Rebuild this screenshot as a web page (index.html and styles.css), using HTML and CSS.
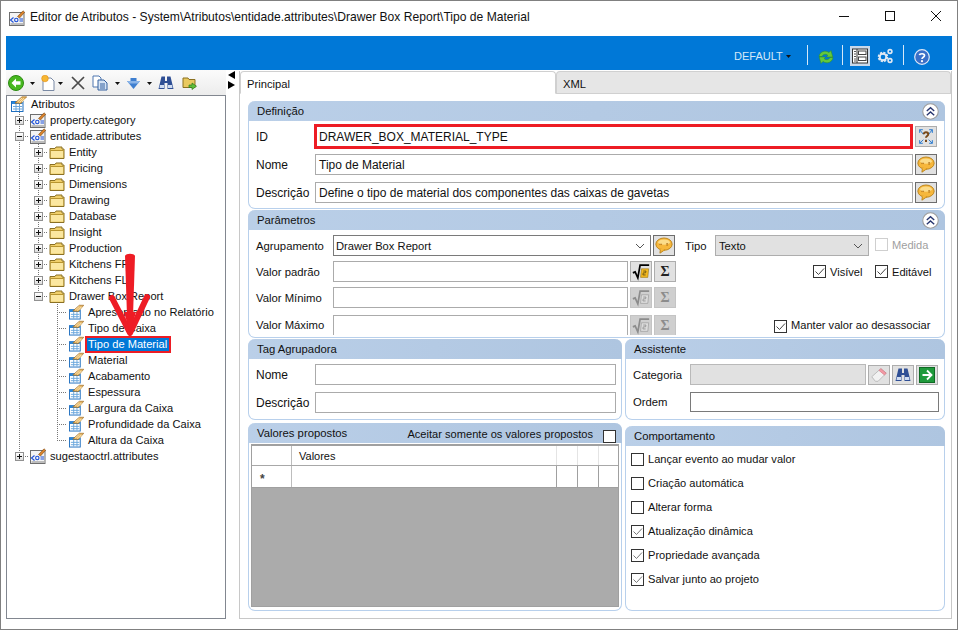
FILE: index.html
```html
<!DOCTYPE html>
<html lang="pt">
<head>
<meta charset="utf-8">
<title>Editor de Atributos</title>
<link rel="stylesheet" href="styles.css">
</head>
<body>
<svg class="defs" width="0" height="0">
  <symbol id="attr" viewBox="0 0 16 16">
    <rect x=".5" y="5.500" width="11.500" height="10" fill="#fff" stroke="#1f6fc0"/>
    <rect x="1" y="5.500" width="10.500" height="2.500" fill="#2b86d8"/>
    <path d="M2 10.500h9M2 13h9M5 8v7M8.500 8v7" stroke="#6aa6dc" fill="none"/>
    <path d="M4 7L11 .8h4.700L10 7.500z" fill="#e6b25a" stroke="#9c6a25" stroke-width=".7"/>
    <path d="M6.500 6l4.500-4M8.500 6.500l4.500-4.200M11 6l3.500-3.500" stroke="#fff3d0" stroke-width=".8"/>
  </symbol>
  <symbol id="script" viewBox="0 0 16 16">
    <rect x=".5" y="2.500" width="14.500" height="13" fill="#f4f4f4" stroke="#6e6e6e"/>
    <rect x="1.500" y="13" width="12.500" height="2" fill="#bdbdbd"/>
    <path d="M4.500 7.500L1.500 10l3 2.500" fill="none" stroke="#1b4fd8" stroke-width="1.100"/>
    <circle cx="7.300" cy="10" r="1.700" fill="none" stroke="#1b4fd8" stroke-width="1.100"/>
    <path d="M10.500 9h3.500M10.500 11h3.500" stroke="#1b4fd8"/>
    <path d="M8.500 6.500L14 .8l1.700 1.500L10.500 8z" fill="#d9822b" stroke="#7a4a18" stroke-width=".6"/>
  </symbol>
  <symbol id="folder" viewBox="0 0 16 16">
    <path d="M1 4.500h5l1-1.500h6v2h2v9.500H1z" fill="#f0cf6a" stroke="#8a7024"/>
    <path d="M2 7h12v6.500H2z" fill="#fbe7a0"/>
    <path d="M1.500 6.500h13" stroke="#b8952f"/>
  </symbol>
  <symbol id="balloon" viewBox="0 0 22 21">
    <ellipse cx="11" cy="9" rx="9" ry="6.800" fill="#f6b73c" stroke="#b87f14"/>
    <ellipse cx="11" cy="6.800" rx="6.500" ry="3" fill="#fbdc8a"/>
    <path d="M7 14.500l-.5 4.500 5-3.500z" fill="#f6b73c" stroke="#b87f14"/>
    <path d="M7 14.800l4 .5" stroke="#f6b73c" stroke-width="1.400"/>
    <path d="M6.500 8.500V10M8 8.500V10M13.500 8.500h2M13.500 10h2" stroke="#a5620f" stroke-width=".9"/>
  </symbol>
  <symbol id="sqrt" viewBox="0 0 22 21">
    <path d="M2 12l2.500-1 3 6.500L10 3.500h10" fill="none" stroke="#000" stroke-width="1.900"/>
    <path d="M11.500 7.500h8l-1 9.500h-8z" fill="#f5b91f" stroke="#8a6a10" stroke-width=".6"/>
    <path d="M13.500 10h3l-.4 2h-2.600l-.4 2.300h3" fill="none" stroke="#5a4a10" stroke-width=".9"/>
  </symbol>
  <symbol id="sqrtoff" viewBox="0 0 22 21">
    <path d="M2 12l2.500-1 3 6.500L10 3.500h10" fill="none" stroke="#8c8c8c" stroke-width="1.900"/>
    <path d="M11.500 7.500h8l-1 9.500h-8z" fill="#dcdcdc" stroke="#8c8c8c" stroke-width=".6"/>
    <path d="M13.500 10h3l-.4 2h-2.600l-.4 2.300h3" fill="none" stroke="#8c8c8c" stroke-width=".9"/>
  </symbol>
  <symbol id="binoc" viewBox="0 0 16 16">
    <path d="M3.500 1.500h3.500v4.500h2V1.500h3.500l3 12.500h-6V8h-3v6h-6z" fill="#2f4f95"/>
    <path d="M2 10h4v3H1.500zM10 10h4l.5 3H10z" fill="#cfdcf2"/>
  </symbol>
  <symbol id="chevs" viewBox="0 0 16 16">
    <circle cx="8" cy="8" r="7.300" fill="#fff" stroke="#9c9c9c"/>
    <path d="M4.500 7.500L8 4.500l3.500 3M4.500 11.500L8 8.500l3.500 3" fill="none" stroke="#27356f" stroke-width="1.300"/>
  </symbol>
  <symbol id="gear" viewBox="0 0 16 16">
    <circle cx="6" cy="9" r="4" fill="none" stroke="#dfe8f3" stroke-width="2.600" stroke-dasharray="2 1.100"/>
    <circle cx="6" cy="9" r="3.300" fill="none" stroke="#dfe8f3" stroke-width="1.900"/>
    <circle cx="13" cy="3.500" r="1.900" fill="none" stroke="#dfe8f3" stroke-width="1.600"/>
    <circle cx="13" cy="12.500" r="1.900" fill="none" stroke="#dfe8f3" stroke-width="1.600"/>
  </symbol>
  <symbol id="caret" viewBox="0 0 5 3"><path d="M0 0h5L2.500 3z" fill="#111"/></symbol>
  <symbol id="drop" viewBox="0 0 10 6"><path d="M1 1l4 4 4-4" fill="none" stroke="#555" stroke-width="1"/></symbol>
</svg>

<div class="win">
  <header class="title">
    <svg class="tico"><use href="#script"/></svg>
    <span class="ttext">Editor de Atributos - System\Atributos\entidade.attributes\Drawer Box Report\Tipo de Material</span>
    <svg class="ctl" viewBox="0 0 12 12"><path d="M1 6.500h10" stroke="#111"/></svg>
    <svg class="ctl" viewBox="0 0 12 12"><rect x="1.500" y="1.500" width="9" height="9" fill="none" stroke="#111"/></svg>
    <svg class="ctl" viewBox="0 0 12 12"><path d="M1 1l10 10M11 1L1 11" stroke="#111"/></svg>
  </header>

  <div class="bluebar">
    <span class="deflt">DEFAULT</span>
    <svg class="bcaret"><use href="#caret"/></svg>
    <i class="bsep s1"></i>
    <svg class="bico refresh" viewBox="0 0 16 16">
      <path d="M1 7.500C1.500 3 7 .5 11 3.500L13 1.500 14.800 8H8.500l1.300-1.800C7.500 4.500 5 5.500 4 7.500z" fill="#62c83c" stroke="#2f8a1e" stroke-width=".5"/>
      <path d="M15 8.500c-.5 4.500-6 7-10 4L3 14.500 1.200 8h6.300L6.200 9.800c2.300 1.700 4.800.7 5.800-1.300z" fill="#62c83c" stroke="#2f8a1e" stroke-width=".5"/>
    </svg>
    <i class="bsep s2"></i>
    <span class="lay">
      <svg viewBox="0 0 16 16" class="layico">
        <rect x=".5" y="1" width="15" height="14" fill="#fff" stroke="#333"/>
        <path d="M5 1v14" stroke="#333"/>
        <path d="M2 3.500h2M2 6h2M2 8.500h2M2 11h2M2 13h2" stroke="#555"/>
        <rect x="6.500" y="3" width="7.500" height="3.500" fill="#fff" stroke="#444"/>
        <rect x="6.500" y="9" width="7.500" height="3.500" fill="#fff" stroke="#444"/>
      </svg>
    </span>
    <svg class="bico gear"><use href="#gear"/></svg>
    <i class="bsep s3"></i>
    <svg class="bico help" viewBox="0 0 16 16">
      <circle cx="8" cy="8" r="7.300" fill="#3a6fc8" stroke="#dfe8f7" stroke-width="1.200"/>
      <path d="M5.500 6.200C5.700 4.500 10.500 4 10.500 6.500 10.500 8.300 8 8.200 8 10" fill="none" stroke="#fff" stroke-width="1.700"/>
      <circle cx="8" cy="12.200" r="1.100" fill="#fff"/>
    </svg>
  </div>

  <div class="main">
    <aside class="left">
      <div class="tools">
        <svg class="t16 m2" viewBox="0 0 16 16">
          <circle cx="8" cy="8" r="7.500" fill="#47b81f" stroke="#2c8a12"/>
          <path d="M8 3.500L3.500 8 8 12.500V9.800h4.500V6.200H8z" fill="#fff"/>
        </svg>
        <svg class="car m6"><use href="#caret"/></svg>
        <svg class="t14 m6" viewBox="0 0 14 16">
          <path d="M2 3h8l3 3v9.500H2z" fill="#fff" stroke="#7a8aa5"/>
          <circle cx="4" cy="3.500" r="3.300" fill="#f7b733" stroke="#e08c12" stroke-width=".6"/>
        </svg>
        <svg class="car m3"><use href="#caret"/></svg>
        <svg class="t14 m8" viewBox="0 0 14 14"><path d="M1 1l12 12M13 1L1 13" stroke="#4a4a4a" stroke-width="1.700"/></svg>
        <svg class="t16 m7" viewBox="0 0 16 16">
          <path d="M1 1h6l2 2v9H1z" fill="#fff" stroke="#4f77b0"/>
          <path d="M6 5h6l3 3v7H6z" fill="#d6e4f5" stroke="#35609f"/>
          <path d="M8 9h5M8 11h5M8 13h5" stroke="#35609f"/>
        </svg>
        <svg class="car m7"><use href="#caret"/></svg>
        <svg class="t15 m6" viewBox="0 0 15 16"><path d="M4.500 3h6v3H14l-6.500 8L1 6h3.500z" fill="#3f7fd0"/><path d="M1 6h13l-2 2.500H3z" fill="#8ab4e8"/></svg>
        <svg class="car m6"><use href="#caret"/></svg>
        <svg class="t16 m6"><use href="#binoc"/></svg>
        <svg class="t16 m8" viewBox="0 0 16 16">
          <path d="M1 3h5l1 1.500h6v8H1z" fill="#e9c95f" stroke="#8a7020"/>
          <path d="M7 10h3V8l4.500 3.200L10 14.500v-2H7z" fill="#5fbe3a" stroke="#2f7a1c" stroke-width=".7"/>
        </svg>
      </div>
      <nav class="tree">
        <div class="row root"><svg class="ic"><use href="#attr"/></svg><span class="lb">Atributos</span></div>
        <div class="row"><i class="c v h"><b class="ex"></b></i><svg class="ic"><use href="#script"/></svg><span class="lb">property.category</span></div>
        <div class="row"><i class="c v h"><b class="ex mn"></b></i><svg class="ic"><use href="#script"/></svg><span class="lb">entidade.attributes</span></div>
        <div class="row"><i class="c v"></i><i class="c v h"><b class="ex"></b></i><svg class="ic"><use href="#folder"/></svg><span class="lb">Entity</span></div>
        <div class="row"><i class="c v"></i><i class="c v h"><b class="ex"></b></i><svg class="ic"><use href="#folder"/></svg><span class="lb">Pricing</span></div>
        <div class="row"><i class="c v"></i><i class="c v h"><b class="ex"></b></i><svg class="ic"><use href="#folder"/></svg><span class="lb">Dimensions</span></div>
        <div class="row"><i class="c v"></i><i class="c v h"><b class="ex"></b></i><svg class="ic"><use href="#folder"/></svg><span class="lb">Drawing</span></div>
        <div class="row"><i class="c v"></i><i class="c v h"><b class="ex"></b></i><svg class="ic"><use href="#folder"/></svg><span class="lb">Database</span></div>
        <div class="row"><i class="c v"></i><i class="c v h"><b class="ex"></b></i><svg class="ic"><use href="#folder"/></svg><span class="lb">Insight</span></div>
        <div class="row"><i class="c v"></i><i class="c v h"><b class="ex"></b></i><svg class="ic"><use href="#folder"/></svg><span class="lb">Production</span></div>
        <div class="row"><i class="c v"></i><i class="c v h"><b class="ex"></b></i><svg class="ic"><use href="#folder"/></svg><span class="lb">Kitchens FF</span></div>
        <div class="row"><i class="c v"></i><i class="c v h"><b class="ex"></b></i><svg class="ic"><use href="#folder"/></svg><span class="lb">Kitchens FL</span></div>
        <div class="row"><i class="c v"></i><i class="c l"><b class="ex mn"></b></i><svg class="ic"><use href="#folder"/></svg><span class="lb">Drawer Box Report</span></div>
        <div class="row"><i class="c v"></i><i class="c"></i><i class="c v h"></i><svg class="ic lf"><use href="#attr"/></svg><span class="lb lf2">Apresentado no Relatório</span></div>
        <div class="row"><i class="c v"></i><i class="c"></i><i class="c v h"></i><svg class="ic lf"><use href="#attr"/></svg><span class="lb lf2">Tipo de Caixa</span></div>
        <div class="row"><i class="c v"></i><i class="c"></i><i class="c v h"></i><svg class="ic lf"><use href="#attr"/></svg><span class="lb lf2 sel">Tipo de Material</span></div>
        <div class="row"><i class="c v"></i><i class="c"></i><i class="c v h"></i><svg class="ic lf"><use href="#attr"/></svg><span class="lb lf2">Material</span></div>
        <div class="row"><i class="c v"></i><i class="c"></i><i class="c v h"></i><svg class="ic lf"><use href="#attr"/></svg><span class="lb lf2">Acabamento</span></div>
        <div class="row"><i class="c v"></i><i class="c"></i><i class="c v h"></i><svg class="ic lf"><use href="#attr"/></svg><span class="lb lf2">Espessura</span></div>
        <div class="row"><i class="c v"></i><i class="c"></i><i class="c v h"></i><svg class="ic lf"><use href="#attr"/></svg><span class="lb lf2">Largura da Caixa</span></div>
        <div class="row"><i class="c v"></i><i class="c"></i><i class="c v h"></i><svg class="ic lf"><use href="#attr"/></svg><span class="lb lf2">Profundidade da Caixa</span></div>
        <div class="row"><i class="c v"></i><i class="c"></i><i class="c l"></i><svg class="ic lf"><use href="#attr"/></svg><span class="lb lf2">Altura da Caixa</span></div>
        <div class="row"><i class="c l"><b class="ex"></b></i><svg class="ic"><use href="#script"/></svg><span class="lb">sugestaoctrl.attributes</span></div>
      </nav>
    </aside>

    <div class="split">
      <span class="tri-l"></span>
      <span class="tri-r"></span>
    </div>

    <section class="tabset">
      <div class="tabs">
        <div class="tab on">Principal</div>
        <div class="tab">XML</div>
      </div>
      <div class="pages">
        <div class="panel wide def">
          <div class="head">Definição<svg class="up"><use href="#chevs"/></svg></div>
          <div class="frow r1"><span class="lab l58">ID</span><div class="field red">DRAWER_BOX_MATERIAL_TYPE</div><span class="btn b2"><svg class="bi q" viewBox="0 0 22 21">
            <path d="M4 3l4 5M4 3v3.500M4 3h3.500M18 3l-4 5M18 3v3.500M18 3h-3.500M4 18l4-4M4 18v-3.500M4 18h3.500M18 18l-4-4M18 18v-3.500M18 18h-3.500" fill="none" stroke="#2a7bd0" stroke-width="1.100"/>
            <path d="M8.500 8c0-3 5-3 5 0 0 2-2.500 2-2.500 4M11 14v2.500" fill="none" stroke="#7a4a1a" stroke-width="2.200"/></svg></span></div>
          <div class="frow r2"><span class="lab l59">Nome</span><div class="field f598">Tipo de Material</div><span class="btn dark"><svg class="bi"><use href="#balloon"/></svg></span></div>
          <div class="frow r3"><span class="lab l59">Descrição</span><div class="field f598">Define o tipo de material dos componentes das caixas de gavetas</div><span class="btn dark"><svg class="bi"><use href="#balloon"/></svg></span></div>
        </div>

        <div class="panel wide par">
          <div class="head">Parâmetros<svg class="up"><use href="#chevs"/></svg></div>
          <div class="frow p1">
            <span class="lab l77">Agrupamento</span>
            <div class="field dk combo">Drawer Box Report<svg class="dd"><use href="#drop"/></svg></div>
            <span class="btn dark"><svg class="bi"><use href="#balloon"/></svg></span>
            <span class="lab tipo">Tipo</span>
            <div class="field gray tsel">Texto<svg class="dd"><use href="#drop"/></svg></div>
            <span class="ck off"></span><span class="cklab muted">Medida</span>
          </div>
          <div class="frow p2">
            <span class="lab l77">Valor padrão</span>
            <div class="field f295"></div>
            <span class="btn"><svg class="bi"><use href="#sqrt"/></svg></span>
            <span class="btn sig">Σ</span>
            <span class="ck vis on"><svg viewBox="0 0 11 11"><path d="M1.500 5.500L4.500 8.500 10 2.500" fill="none" stroke="#444"/></svg></span><span class="cklab w45">Visível</span>
            <span class="ck on"><svg viewBox="0 0 11 11"><path d="M1.500 5.500L4.500 8.500 10 2.500" fill="none" stroke="#444"/></svg></span><span class="cklab">Editável</span>
          </div>
          <div class="frow p3">
            <span class="lab l77">Valor Mínimo</span>
            <div class="field f295"></div>
            <span class="btn dis"><svg class="bi"><use href="#sqrtoff"/></svg></span>
            <span class="btn sig dis">Σ</span>
          </div>
          <div class="frow p4">
            <span class="lab l77">Valor Máximo</span>
            <div class="field f295 cut"></div>
            <span class="btn dis cut"><svg class="bi"><use href="#sqrtoff"/></svg></span>
            <span class="btn sig dis cut">Σ</span>
            <span class="ck man on"><svg viewBox="0 0 11 11"><path d="M1.500 5.500L4.500 8.500 10 2.500" fill="none" stroke="#444"/></svg></span><span class="cklab">Manter valor ao desassociar</span>
          </div>
        </div>

        <div class="panel tag">
          <div class="head">Tag Agrupadora</div>
          <div class="frow t1"><span class="lab l59">Nome</span><div class="field f301"></div></div>
          <div class="frow t2"><span class="lab l59">Descrição</span><div class="field f301"></div></div>
        </div>

        <div class="panel assist">
          <div class="head">Assistente</div>
          <div class="frow t1">
            <span class="lab l57 small">Categoria</span>
            <div class="field gray2 f176"></div>
            <span class="btn tb"><svg class="bi" viewBox="0 0 22 21"><path d="M3 13l10-9 6 5-9 9H7z" fill="#f2f2f2" stroke="#b8b8b8"/><path d="M11 6l2-2 6 5-2 2z" fill="#f29aa5" stroke="#d06a78" stroke-width=".6"/></svg></span>
            <span class="btn tb"><svg class="bi18"><use href="#binoc"/></svg></span>
            <span class="btn tb"><svg class="bi18" viewBox="0 0 16 16"><rect x=".5" y=".5" width="15" height="15" fill="#1f9a3c" stroke="#0f6a24"/><path d="M8 3.500L12.500 8 8 12.500M3.500 8h8.500" fill="none" stroke="#fff" stroke-width="1.800"/></svg></span>
          </div>
          <div class="frow t2b"><span class="lab l57 small">Ordem</span><div class="field dk f249"></div></div>
        </div>

        <div class="panel vals">
          <div class="head">Valores propostos<span class="hright">Aceitar somente os valores propostos</span><span class="ck hck"></span></div>
          <div class="grid">
            <div class="gh">
              <span class="gc g0"></span><span class="gc g1">Valores</span><span class="gc g2"></span><span class="gc g2"></span><span class="gc g3"></span>
            </div>
            <div class="gr">
              <span class="gc g0 star">*</span><span class="gc g1"></span><span class="gc g2"></span><span class="gc g2"></span><span class="gc g3"></span>
            </div>
          </div>
        </div>

        <div class="panel behav">
          <div class="head">Comportamento</div>
          <div class="checks">
            <label class="citem"><span class="ck"></span><span class="cklab">Lançar evento ao mudar valor</span></label>
            <label class="citem"><span class="ck"></span><span class="cklab">Criação automática</span></label>
            <label class="citem"><span class="ck"></span><span class="cklab">Alterar forma</span></label>
            <label class="citem"><span class="ck on"><svg viewBox="0 0 11 11"><path d="M1.500 5.500L4.500 8.500 10 2.500" fill="none" stroke="#777"/></svg></span><span class="cklab">Atualização dinâmica</span></label>
            <label class="citem"><span class="ck on"><svg viewBox="0 0 11 11"><path d="M1.500 5.500L4.500 8.500 10 2.500" fill="none" stroke="#777"/></svg></span><span class="cklab">Propriedade avançada</span></label>
            <label class="citem"><span class="ck on"><svg viewBox="0 0 11 11"><path d="M1.500 5.500L4.500 8.500 10 2.500" fill="none" stroke="#777"/></svg></span><span class="cklab">Salvar junto ao projeto</span></label>
          </div>
        </div>
      </div>
    </section>
  </div>

  <svg class="arrow" viewBox="0 0 44 86">
    <path d="M17 4c1-3 9-3 10 0l-2 60h-6z" fill="#ee1c25"/>
    <path d="M4 46L22 81 39 45" fill="none" stroke="#ee1c25" stroke-width="6" stroke-linecap="round" stroke-linejoin="round"/>
    <path d="M16 60h12l-6 21z" fill="#ee1c25"/>
  </svg>
</div>
</body>
</html>
```

FILE: styles.css
```css
* { box-sizing: border-box; }
html, body { margin: 0; padding: 0; }
body {
  width: 958px; height: 630px; overflow: hidden;
  font: 12px/16px "Liberation Sans", Arial, sans-serif;
  color: #111; background: #fff;
}
.defs { display: block; height: 0; }
.win {
  position: relative; width: 958px; height: 630px;
  border: 1px solid #808080; background: #fff;
  display: flex; flex-direction: column;
}

/* title bar */
.title { height: 35px; display: flex; align-items: center; flex: none; }
.tico { width: 16px; height: 16px; margin-left: 8px; margin-top: -2px; flex: none; }
.ttext { margin-left: 5px; width: 808px; flex: none; margin-top: -3px; white-space: nowrap; font-size: 12.1px; }
.ctl { width: 12px; height: 12px; margin-right: 34px; margin-top: -5px; flex: none; }
.ctl:last-child { margin-right: 0; }

/* blue bar */
.bluebar {
  height: 34px; margin: 0 5px; padding-top: 5px; background: #0078d7; flex: none;
  display: flex; align-items: center; color: #d5e8f8;
}
.deflt { margin-left: 728px; width: 47px; white-space: nowrap; font-size: 11px; }
.bcaret { width: 5px; height: 3px; margin-left: 5px; margin-top: 1px; }
.bsep { width: 1px; height: 20px; background: #d5e8f8; display: block; margin-top: -1px; }
.s1 { margin-left: 16px; }
.bico { width: 16px; height: 16px; display: block; }
.refresh { margin-left: 10px; margin-top: 2px; }
.s2 { margin-left: 8px; }
.lay { width: 20px; height: 20px; margin-left: 7px; background: #c9d9ea; display: flex; align-items: center; justify-content: center; }
.layico { width: 16px; height: 16px; }
.gear { margin-left: 7px; }
.s3 { margin-left: 10px; }
.help { margin-left: 10px; margin-top: 2px; }

/* main */
.main { flex: 1; display: flex; padding: 0 5px 10px; min-height: 0; }
.left { width: 220px; display: flex; flex-direction: column; flex: none; }
.tools {
  height: 25px; flex: none; display: flex; align-items: center;
  background: linear-gradient(#fbfbfb, #ececec);
}
.t16 { width: 16px; height: 16px; }
.t15 { width: 15px; height: 16px; }
.t14 { width: 14px; height: 16px; }
.car { width: 5px; height: 3px; margin-top: 2px; }
.m2 { margin-left: 2px; }
.m3 { margin-left: 3px; }
.m6 { margin-left: 6px; }
.m7 { margin-left: 7px; }
.m8 { margin-left: 8px; }

/* tree */
.tree { flex: 1; border: 1px solid #828790; background: #fff; padding-left: 3px; overflow: hidden; font-size: 11.1px; }
.row { display: flex; height: 16px; align-items: center; white-space: nowrap; }
.c {
  display: flex; align-items: center; justify-content: center;
  width: 19px; height: 16px; flex: none; background-repeat: no-repeat;
}
.v { background-image: repeating-linear-gradient(#777 0 1px, transparent 1px 2px); background-size: 1px 100%; background-position: 9px 0; }
.v.h { background-image: repeating-linear-gradient(#777 0 1px, transparent 1px 2px), repeating-linear-gradient(90deg, #777 0 1px, transparent 1px 2px); background-size: 1px 100%, 10px 1px; background-position: 9px 0, 9px 8px; }
.l { background-image: repeating-linear-gradient(#777 0 1px, transparent 1px 2px), repeating-linear-gradient(90deg, #777 0 1px, transparent 1px 2px); background-size: 1px 8px, 10px 1px; background-position: 9px 0, 9px 8px; }
.ex {
  width: 9px; height: 9px; border: 1px solid #919191; display: block;
  background:
    linear-gradient(#111, #111) center / 5px 1px no-repeat,
    linear-gradient(#111, #111) center / 1px 5px no-repeat,
    linear-gradient(#fff, #dcdcdc);
}
.ex.mn {
  background:
    linear-gradient(#111, #111) center / 5px 1px no-repeat,
    linear-gradient(#fff, #dcdcdc);
}
.ic { width: 16px; height: 16px; flex: none; margin-left: 1px; }
.lb { margin-left: 4px; }
.ic.lf { margin-left: 2px; width: 15px; }
.lb.lf2 { margin-left: 4px; }
.lb.sel {
  background: #0078d7; color: #fff; height: 13px; line-height: 13px;
  padding: 0 2px 0 1px; margin-left: 3px;
  box-shadow: 0 0 0 2px #ed1c24;
}

/* splitter */
.split { width: 13px; flex: none; display: flex; flex-direction: column; align-items: center; padding-top: 1px; }
.tri-l { width: 0; height: 0; border: 4px solid transparent; border-right: 7px solid #000; border-left: 0; margin-left: -3px; }
.tri-r { width: 0; height: 0; border: 4px solid transparent; border-left: 7px solid #000; border-right: 0; margin-left: -3px; margin-top: 2px; }

/* tabs */
.tabset { flex: 1; display: flex; flex-direction: column; border: 1px solid #c8c8c8; border-top: 0; min-width: 0; margin-top: 1px; }
.tabs { height: 23px; display: flex; flex: none; font-size: 11.2px; }
.tab { height: 23px; padding: 4px 0 0 6px; border: 1px solid #d0d0d0; border-bottom: 1px solid #c8c8c8; border-radius: 4px 4px 0 0; }
.tab.on { width: 316px; background: #fff; border-bottom-color: #fff; position: relative; z-index: 1; }
.tab:not(.on) { flex: 1; background: #e6e6e6; }
.pages {
  flex: 1; padding: 7px 7px 0 8px;
  display: grid; grid-template-columns: 374px 320px; column-gap: 3px; row-gap: 1px;
  grid-template-rows: 108px 128px 81px 190px; border-top: 1px solid #d0d0d0; margin-top: -1px;
}

/* panels */
.panel { border: 1px solid #b8d0ec; border-top: 0; border-radius: 7px; background: #fff; min-width: 0; }
.wide { grid-column: 1 / 3; }
.head {
  height: 20px; margin: 0 -1px; padding: 2px 0 0 9px; border-radius: 7px 7px 0 0;
  background: linear-gradient(90deg, #bacfe8, #aec5e0);
  display: flex; color: #111; font-size: 11.3px;
}
.up { width: 17px; height: 17px; margin-left: auto; margin-right: 6px; margin-top: 0; flex: none; }
.frow { display: flex; align-items: center; padding-left: 7px; white-space: nowrap; }
.lab { display: block; flex: none; }
.l57 { width: 57px; }
.l58 { width: 58px; }
.l59 { width: 59px; }
.l77 { width: 77px; font-size: 11.3px; }
.small { font-size: 11.3px; }
.field {
  height: 21px; border: 1px solid #ababab; background: #fff; padding: 2px 3px 0;
  position: relative; flex: none; white-space: nowrap;
}
.red { width: 599px; height: 25px; border: 3px solid #ed1c24; padding: 2px 2px 0; }
.f598 { width: 598px; }
.f295 { width: 295px; }
.f301 { width: 301px; }
.f176 { width: 176px; }
.f249 { width: 249px; height: 20px; }
.dk { border-color: #7a7a7a; }
.gray { background: #e1e1e1; border-color: #adadad; }
.gray2 { background: #e1e1e1; border-color: #b9b9b9; }
.combo { width: 318px; font-size: 11.2px; padding-left: 2px; }
.tsel { width: 154px; font-size: 11.2px; }
.dd { position: absolute; right: 5px; top: 7px; width: 10px; height: 6px; }
.btn {
  width: 22px; height: 21px; flex: none; margin-left: 2px;
  background: #e1e1e1; border: 1px solid #adadad;
  display: flex; align-items: center; justify-content: center;
}
.b2 { margin-left: 2px; }
.dark { border-color: #6d6d6d; }
.dis { background: #cfcfcf; border-color: #c4c4c4; }
.cut { height: 20px; border-bottom: 0; }
.bi { width: 20px; height: 19px; flex: none; }
.bi18 { width: 18px; height: 16px; flex: none; }
.sig { font: bold 14px/16px "Liberation Serif", serif; color: #222; }
.sig.dis { color: #8c8c8c; }

.r1 { margin-top: 3px; height: 25px; }
.r2 { margin-top: 5px; height: 21px; }
.r3 { margin-top: 7px; height: 21px; }
.p1 { margin-top: 5px; height: 21px; }
.p2 { margin-top: 5px; height: 21px; }
.p3 { margin-top: 5px; height: 21px; }
.p4 { margin-top: 7px; height: 20px; align-items: flex-start; }
.p4 .lab { margin-top: 2px; }
.p4 .cklab { margin-top: 2px; }
.p4 .man { margin-top: 5px; }
.t1 { margin-top: 5px; height: 21px; }
.t2 { margin-top: 7px; height: 21px; }
.t2b { margin-top: 7px; height: 20px; }
.assist .btn { height: 20px; }
.tipo { margin-left: 10px; width: 30px; font-size: 11.3px; }

.ck {
  display: flex; width: 13px; height: 13px; border: 1px solid #333; background: #fff; flex: none;
}
.ck svg { width: 11px; height: 11px; display: block; }
.ck.off { border-color: #cfcfcf; margin-left: 6px; margin-top: -2px; }
.cklab { margin-left: 4px; white-space: nowrap; font-size: 11.1px; }
.muted { color: #a0a0a0; margin-top: -2px; }
.vis { margin-left: 137px; }
.w45 { width: 45px; }
.man { margin-left: 98px; }

.hright { margin-left: auto; margin-top: 1px; font-size: 11.1px; }
.hck { margin: 5px 6px 0 10px; }

/* grid */
.grid { margin: 1px 2px 0; height: 163px; background: #ababab; border: 1px solid #a0a0a0; border-top: 2px solid #a0a0a0; }
.gh, .gr { display: flex; background: #fff; }
.gh { height: 20px; border-bottom: 1px solid #a8a8a8; font-size: 11px; }
.gr { height: 22px; border-bottom: 1px solid #a0a0a0; }
.gc { display: block; flex: none; height: 100%; border-right: 1px solid #e4e4e4; }
.gr .gc { border-right-color: #a0a0a0; }
.gc.g0 { width: 40px; border-right-color: #bdbdbd; }
.g1 { width: 265px; padding: 2px 0 0 7px; }
.g2 { width: 21px; }
.g3 { width: 21px; border-right: 0; }
.star { padding: 5px 0 0 8px; font-weight: bold; color: #444; font-size: 12px; }

.behav { margin-top: 5px; height: 185px; }
.vals { margin-top: 2px; height: 188px; }
.checks { padding: 1px 0 0 5px; }
.citem { display: flex; align-items: center; height: 24px; }

/* arrow overlay */
.arrow { position: absolute; left: 107px; top: 251px; width: 44px; height: 86px; pointer-events: none; }
```
